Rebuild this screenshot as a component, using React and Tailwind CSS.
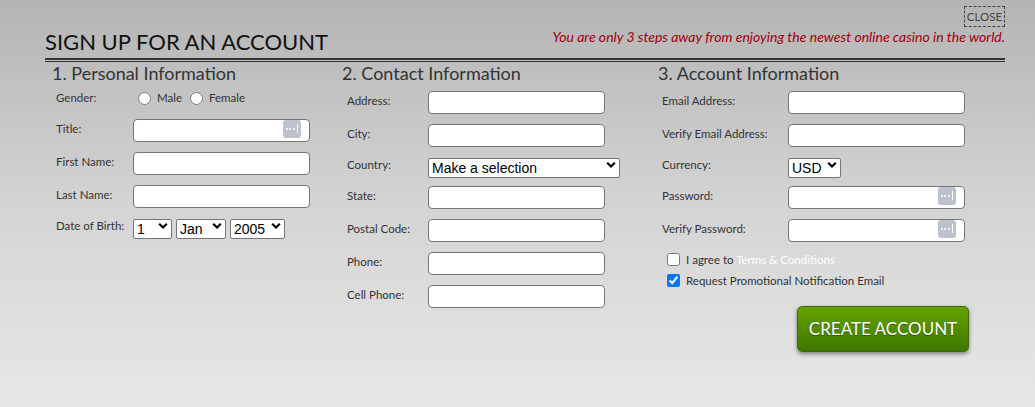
import React from 'react';

const KeyIcon = () => (
    <span className="absolute right-[9px] top-1/2 -translate-y-1/2 w-[18px] h-[18px] rounded-[3px] bg-[#bcc3cd] flex items-center justify-center gap-[1.5px]">
        <span className="w-[2px] h-[2px] rounded-full bg-white"></span>
        <span className="w-[2px] h-[2px] rounded-full bg-white"></span>
        <span className="w-[2px] h-[2px] rounded-full bg-white"></span>
        <span className="w-[1px] h-[9px] bg-white ml-[1px]"></span>
    </span>
);

const TextBox = ({ icon }) => (
    <div className="relative w-[177px] h-[23px]">
        <input type="text" className="w-full h-full bg-white border border-[#767676] rounded-[4px] px-2 text-[13px] outline-none" />
        {icon && <KeyIcon />}
    </div>
);

const Chevron = () => (
    <svg className="absolute right-[4px] top-1/2 -translate-y-1/2 pointer-events-none" width="10" height="7" viewBox="0 0 10 7">
        <path d="M1.2 1.2 L5 5 L8.8 1.2" fill="none" stroke="#000" strokeWidth="2.2" />
    </svg>
);

const Select = ({ value, width }) => (
    <div className={`relative h-[20px] ${width}`}>
        <select className="appearance-none w-full h-full bg-white border border-[#767676] rounded-[2px] pl-[3px] py-0 text-[14px] leading-[18px] text-black font-['Liberation_Sans',Arial,sans-serif] outline-none">
            <option>{value}</option>
        </select>
        <Chevron />
    </div>
);

const Row = ({ label, labelW, h = 'h-[33px]', children }) => (
    <div className={`flex items-center ${h}`}>
        <span className={`${labelW} shrink-0 text-[11.5px] text-[#333]`}>{label}</span>
        {children}
    </div>
);

const SectionTitle = ({ children }) => (
    <h2 className="h-[22px] flex items-end pl-[7px] text-[18px] leading-[22px] text-[#333]">{children}</h2>
);

export default function App() {
    return (
        <div className="h-[407px] w-full overflow-hidden bg-gradient-to-b from-[#b4b4b4] via-[#d4d4d4] to-[#e7e7e7] font-['Lato','Open_Sans',sans-serif] pl-[45px] pr-[30px] pt-[6px]">
            <div className="flex justify-end">
                <button className="h-[21px] w-[41px] border border-dashed border-[#444] text-[11.5px] leading-none text-[#444]">CLOSE</button>
            </div>
            <div className="flex justify-between items-start">
                <h1 className="text-[22px] leading-[24px] text-[#111] pt-[3px]">SIGN UP FOR AN ACCOUNT</h1>
                <p className="text-[14px] leading-[16px] italic text-[#a00010] mt-[2px]">You are only 3 steps away from enjoying the newest online casino in the world.</p>
            </div>
            <div className="h-[4px] border-t-2 border-b border-[#333] mt-[4px]"></div>

            <div className="flex">
                <section className="w-[290px] shrink-0">
                    <SectionTitle>1. Personal Information</SectionTitle>
                    <div className="pl-[11px]">
                        <Row label="Gender:" labelW="w-[82px]" h="h-[28px]">
                            <label className="flex items-center gap-[6px] text-[11.5px] text-[#333]">
                                <input type="radio" name="g" className="w-[13px] h-[13px] m-0" /> Male
                            </label>
                            <label className="flex items-center gap-[6px] text-[11.5px] text-[#333] ml-[8px]">
                                <input type="radio" name="g" className="w-[13px] h-[13px] m-0" /> Female
                            </label>
                        </Row>
                        <Row label="Title:" labelW="w-[77px]"><TextBox icon /></Row>
                        <Row label="First Name:" labelW="w-[77px]"><TextBox /></Row>
                        <Row label="Last Name:" labelW="w-[77px]"><TextBox /></Row>
                        <Row label="Date of Birth:" labelW="w-[77px]" h="h-[29px]">
                            <div className="flex gap-[4px]">
                                <Select value="1" width="w-[39px]" />
                                <Select value="Jan" width="w-[50px]" />
                                <Select value="2005" width="w-[55px]" />
                            </div>
                        </Row>
                    </div>
                </section>

                <section className="w-[316px] shrink-0">
                    <SectionTitle>2. Contact Information</SectionTitle>
                    <div className="pl-[12px]">
                        <Row label="Address:" labelW="w-[81px]"><TextBox /></Row>
                        <Row label="City:" labelW="w-[81px]"><TextBox /></Row>
                        <Row label="Country:" labelW="w-[81px]" h="h-[29px]">
                            <Select value="Make a selection" width="w-[192px]" />
                        </Row>
                        <Row label="State:" labelW="w-[81px]"><TextBox /></Row>
                        <Row label="Postal Code:" labelW="w-[81px]"><TextBox /></Row>
                        <Row label="Phone:" labelW="w-[81px]"><TextBox /></Row>
                        <Row label="Cell Phone:" labelW="w-[81px]"><TextBox /></Row>
                    </div>
                </section>

                <section className="flex-1">
                    <SectionTitle>3. Account Information</SectionTitle>
                    <div className="pl-[11px]">
                        <Row label="Email Address:" labelW="w-[126px]"><TextBox /></Row>
                        <Row label="Verify Email Address:" labelW="w-[126px]"><TextBox /></Row>
                        <Row label="Currency:" labelW="w-[126px]" h="h-[29px]">
                            <Select value="USD" width="w-[53px]" />
                        </Row>
                        <Row label="Password:" labelW="w-[126px]"><TextBox icon /></Row>
                        <Row label="Verify Password:" labelW="w-[126px]"><TextBox icon /></Row>
                        <div className="pl-[5px] mt-[4px]">
                            <label className="flex items-center h-[21px] gap-[6px] text-[11.5px] text-[#333]">
                                <input type="checkbox" className="w-[13px] h-[13px] m-0" />
                                <span>I agree to <span className="text-white">Terms &amp; Conditions</span></span>
                            </label>
                            <label className="flex items-center h-[21px] gap-[6px] text-[11.5px] text-[#333]">
                                <input type="checkbox" defaultChecked className="w-[13px] h-[13px] m-0" />
                                <span>Request Promotional Notification Email</span>
                            </label>
                        </div>
                        <button className="mt-[15px] ml-[135px] w-[172px] h-[46px] rounded-[5px] border border-[#3b6b00] bg-gradient-to-b from-[#65a300] to-[#3d7700] shadow-[0_2px_4px_rgba(0,0,0,0.45)] text-white text-[17px] [text-shadow:0_1px_1px_rgba(0,0,0,0.4)]">
                            CREATE ACCOUNT
                        </button>
                    </div>
                </section>
            </div>
        </div>
    );
}
